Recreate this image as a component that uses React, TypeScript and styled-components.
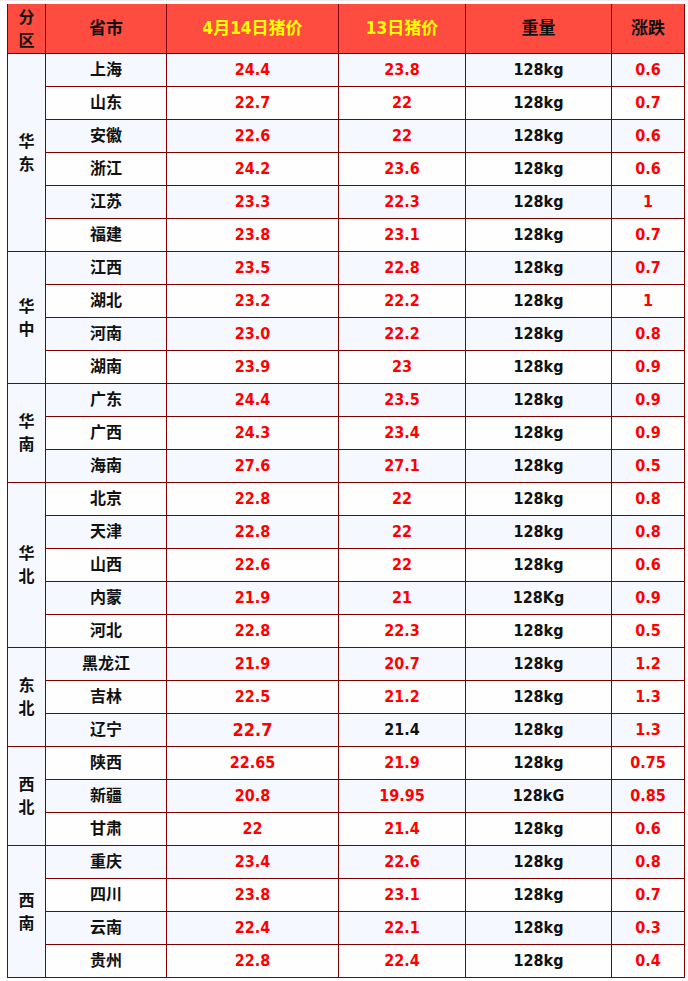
import React from 'react'
import styled, { createGlobalStyle } from 'styled-components'

const GlobalStyle = createGlobalStyle`
  html, body {
    margin: 0;
    padding: 0;
    background: #ffffff;
  }
  body {
    font-family: 'DejaVu Sans', 'Noto Sans CJK SC', sans-serif;
  }
`

const Page = styled.div`
  padding: 3px 0 0 7px;
  border-top: 1px solid #ececec;
`

const Table = styled.table`
  border-collapse: collapse;
  table-layout: fixed;
  width: 677px;
  font-family: 'DejaVu Sans', 'Noto Sans CJK SC', sans-serif;
  font-stretch: semi-condensed;
  font-size: 16px;
  font-weight: 700;
`

const HeadCell = styled.th<{ $yellow?: boolean; $narrow?: boolean }>`
  height: 49px;
  padding: ${(p) => (p.$narrow ? '0 10px' : '0')};
  background: #ff4c40;
  color: ${(p) => (p.$yellow ? '#ffff00' : '#111111')};
  border: 1px solid #800000;
  border-top: none;
  text-align: center;
  vertical-align: middle;
  font-weight: 700;
  font-size: ${(p) => (p.$narrow ? '16px' : '17px')};
  line-height: 23px;
  word-break: break-all;
`

const Row = styled.tr<{ $alt: boolean }>`
  background: ${(p) => (p.$alt ? '#f5f9ff' : '#fefefe')};
`

const Cell = styled.td<{ $tone?: 'red' | 'black'; $big?: boolean }>`
  height: 32px;
  padding: 0;
  border: 1px solid #800000;
  text-align: center;
  vertical-align: middle;
  color: ${(p) => (p.$tone === 'red' ? '#ff0000' : '#111111')};
  font-size: ${(p) => (p.$big ? '18px' : '16px')};
  line-height: 20px;
`

const RegionCell = styled.td`
  padding: 0 10px;
  border: 1px solid #800000;
  background: #f5f9ff;
  text-align: center;
  vertical-align: middle;
  color: #111111;
  font-size: 16px;
  line-height: 23px;
  word-break: break-all;
`

type Item = {
  city: string
  today: string
  prev: string
  weight?: string
  change: string
  bigToday?: boolean
  prevBlack?: boolean
}

const groups: { region: string; items: Item[] }[] = [
  {
    region: '华东',
    items: [
      { city: '上海', today: '24.4', prev: '23.8', change: '0.6' },
      { city: '山东', today: '22.7', prev: '22', change: '0.7' },
      { city: '安徽', today: '22.6', prev: '22', change: '0.6' },
      { city: '浙江', today: '24.2', prev: '23.6', change: '0.6' },
      { city: '江苏', today: '23.3', prev: '22.3', change: '1' },
      { city: '福建', today: '23.8', prev: '23.1', change: '0.7' },
    ],
  },
  {
    region: '华中',
    items: [
      { city: '江西', today: '23.5', prev: '22.8', change: '0.7' },
      { city: '湖北', today: '23.2', prev: '22.2', change: '1' },
      { city: '河南', today: '23.0', prev: '22.2', change: '0.8' },
      { city: '湖南', today: '23.9', prev: '23', change: '0.9' },
    ],
  },
  {
    region: '华南',
    items: [
      { city: '广东', today: '24.4', prev: '23.5', change: '0.9' },
      { city: '广西', today: '24.3', prev: '23.4', change: '0.9' },
      { city: '海南', today: '27.6', prev: '27.1', change: '0.5' },
    ],
  },
  {
    region: '华北',
    items: [
      { city: '北京', today: '22.8', prev: '22', change: '0.8' },
      { city: '天津', today: '22.8', prev: '22', change: '0.8' },
      { city: '山西', today: '22.6', prev: '22', change: '0.6' },
      { city: '内蒙', today: '21.9', prev: '21', weight: '128Kg', change: '0.9' },
      { city: '河北', today: '22.8', prev: '22.3', change: '0.5' },
    ],
  },
  {
    region: '东北',
    items: [
      { city: '黑龙江', today: '21.9', prev: '20.7', change: '1.2' },
      { city: '吉林', today: '22.5', prev: '21.2', change: '1.3' },
      { city: '辽宁', today: '22.7', prev: '21.4', change: '1.3', bigToday: true, prevBlack: true },
    ],
  },
  {
    region: '西北',
    items: [
      { city: '陕西', today: '22.65', prev: '21.9', change: '0.75' },
      { city: '新疆', today: '20.8', prev: '19.95', weight: '128kG', change: '0.85' },
      { city: '甘肃', today: '22', prev: '21.4', change: '0.6' },
    ],
  },
  {
    region: '西南',
    items: [
      { city: '重庆', today: '23.4', prev: '22.6', change: '0.8' },
      { city: '四川', today: '23.8', prev: '23.1', change: '0.7' },
      { city: '云南', today: '22.4', prev: '22.1', change: '0.3' },
      { city: '贵州', today: '22.8', prev: '22.4', change: '0.4' },
    ],
  },
]

export default function App() {
  let index = 0
  return (
    <>
      <GlobalStyle />
      <Page>
        <Table>
          <colgroup>
            <col style={{ width: 38 }} />
            <col style={{ width: 121 }} />
            <col style={{ width: 172 }} />
            <col style={{ width: 127 }} />
            <col style={{ width: 146 }} />
            <col style={{ width: 73 }} />
          </colgroup>
          <thead>
            <tr>
              <HeadCell $narrow>分区</HeadCell>
              <HeadCell>省市</HeadCell>
              <HeadCell $yellow>4月14日猪价</HeadCell>
              <HeadCell $yellow>13日猪价</HeadCell>
              <HeadCell>重量</HeadCell>
              <HeadCell>涨跌</HeadCell>
            </tr>
          </thead>
          <tbody>
            {groups.map((g) =>
              g.items.map((item, i) => {
                const alt = index % 2 === 0
                index += 1
                return (
                  <Row key={item.city} $alt={alt}>
                    {i === 0 && <RegionCell rowSpan={g.items.length}>{g.region}</RegionCell>}
                    <Cell>{item.city}</Cell>
                    <Cell $tone="red" $big={item.bigToday}>
                      {item.today}
                    </Cell>
                    <Cell $tone={item.prevBlack ? 'black' : 'red'}>{item.prev}</Cell>
                    <Cell>{item.weight ?? '128kg'}</Cell>
                    <Cell $tone="red">{item.change}</Cell>
                  </Row>
                )
              })
            )}
          </tbody>
        </Table>
      </Page>
    </>
  )
}
